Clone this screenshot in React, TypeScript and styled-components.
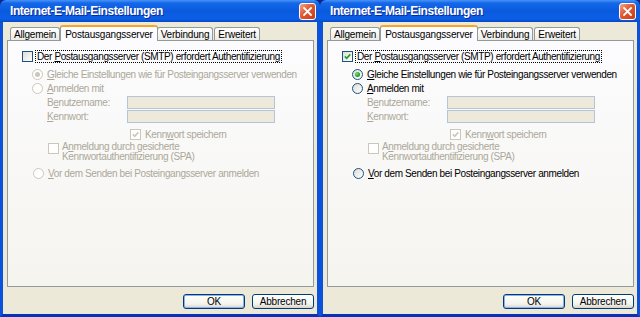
import React from 'react';
import styled, { createGlobalStyle } from 'styled-components';

const GlobalStyle = createGlobalStyle`
  * { box-sizing: border-box; }
  html, body { margin: 0; padding: 0; background: #0A2690; }
  body {
    width: 640px;
    height: 317px;
    overflow: hidden;
    font-family: 'Liberation Sans', Arial, sans-serif;
  }
`;

const Screen = styled.div`
  display: flex;
  width: 640px;
  height: 317px;
  overflow: hidden;
  background: #0A2690;
`;

const Window = styled.section`
  width: 320px;
  height: 317px;
  flex: none;
  display: flex;
  flex-direction: column;
`;

const TitleBar = styled.div`
  height: 22px;
  flex: none;
  display: flex;
  align-items: center;
  justify-content: space-between;
  padding: 0 4px 0 10px;
  border-radius: 6px 6px 0 0;
  background: linear-gradient(
    to bottom,
    #4A92F8 0%,
    #1468E8 14%,
    #0A5ADE 50%,
    #0C60E6 86%,
    #0746C8 100%
  );
`;

const TitleText = styled.span`
  color: #fff;
  font-weight: bold;
  font-size: 12px;
  letter-spacing: -0.45px;
  text-shadow: 1px 1px 0 #0A2A9A;
  white-space: nowrap;
`;

const CloseButton = styled.span`
  width: 17px;
  height: 17px;
  border: 1px solid #fff;
  border-radius: 3px;
  display: flex;
  align-items: center;
  justify-content: center;
  background: linear-gradient(135deg, #F3A48A 0%, #E2582F 45%, #C73C17 100%);
`;

const Body = styled.div`
  flex: 1;
  display: flex;
  flex-direction: column;
  background: #ECE9D8;
  border: 3px solid #0A52DC;
  border-bottom-color: #0831B8;
  border-top: none;
  padding: 3px 3px 5px 4px;
`;

const TabStrip = styled.div`
  height: 16px;
  flex: none;
  display: flex;
  align-items: flex-end;
  padding-left: 3px;
  margin-bottom: -1px;
  position: relative;
  z-index: 1;
`;

const Tab = styled.span<{ $active?: boolean }>`
  height: ${p => (p.$active ? 16 : 13)}px;
  margin: ${p => (p.$active ? '0 -1px 0 -1px' : '0 1px 1px 0')};
  padding: ${p => (p.$active ? '0 4px' : '0 3px')};
  display: flex;
  align-items: center;
  font-size: 10px;
  letter-spacing: -0.2px;
  color: #000;
  white-space: nowrap;
  border: 1px solid #919B9C;
  border-bottom: none;
  border-top: ${p => (p.$active ? '2px solid #F5A623' : '1px solid #919B9C')};
  border-radius: 3px 3px 0 0;
  background: ${p =>
    p.$active ? '#FCFCFE' : 'linear-gradient(to bottom, #FFFFFF, #ECEBE5)'};
  position: relative;
  z-index: ${p => (p.$active ? 2 : 1)};
`;

const Panel = styled.div`
  height: 247px;
  flex: none;
  display: flex;
  flex-direction: column;
  border: 1px solid #919B9C;
  background: linear-gradient(to bottom, #FCFCFE, #F5F4EF);
  padding: 8px 0 0 14px;
  font-size: 10px;
  letter-spacing: -0.38px;
`;

const Option = styled.div<{ $indent: number; $top: number; $off?: boolean; $tall?: boolean }>`
  display: flex;
  align-items: ${p => (p.$tall ? 'flex-start' : 'center')};
  gap: ${p => (p.$tall ? 3 : 4)}px;
  height: ${p => (p.$tall ? 20 : 14)}px;
  margin-top: ${p => p.$top}px;
  padding-left: ${p => p.$indent}px;
  color: ${p => (p.$off ? '#ACA899' : '#000')};
  white-space: nowrap;
`;

const TwoLines = styled.span`
  line-height: 10px;
`;

const Box = styled.span<{ $off?: boolean; $tall?: boolean }>`
  width: 11px;
  height: 11px;
  flex: none;
  margin-top: ${p => (p.$tall ? 1 : 0)}px;
  display: flex;
  align-items: center;
  justify-content: center;
  border: 1px solid ${p => (p.$off ? '#CAC8BB' : '#1C5180')};
  background: ${p =>
    p.$off ? '#FFFFFF' : 'linear-gradient(135deg, #DCDCD7, #FFFFFF)'};
`;

const Radio = styled.span<{ $off?: boolean }>`
  width: 11px;
  height: 11px;
  flex: none;
  border-radius: 50%;
  display: flex;
  align-items: center;
  justify-content: center;
  border: 1px solid ${p => (p.$off ? '#CAC8BB' : '#1C5180')};
  background: ${p =>
    p.$off ? '#FFFFFF' : 'linear-gradient(135deg, #DCDCD7, #FFFFFF)'};
`;

const Dot = styled.span<{ $off?: boolean }>`
  width: 5px;
  height: 5px;
  border-radius: 50%;
  background: ${p =>
    p.$off
      ? '#CAC8BB'
      : 'radial-gradient(circle at 35% 35%, #6EE36A, #21A121 60%, #178A17)'};
`;

const FocusLabel = styled.span`
  border: 1px dotted #000;
  padding: 0 1px;
  line-height: 11px;
  margin-left: -2px;
`;

const Credentials = styled.div`
  display: grid;
  grid-template-columns: 80px 148px;
  grid-auto-rows: 13px;
  row-gap: 1px;
  align-items: center;
  margin-top: 1px;
  padding-left: 25px;
  color: #ACA899;
`;

const Field = styled.span`
  display: block;
  height: 13px;
  border: 1px solid #B7C3D6;
  background: #EDEADC;
`;

const Footer = styled.div`
  display: flex;
  justify-content: flex-end;
  gap: 7px;
  margin-top: 7px;
`;

const Button = styled.button<{ $default?: boolean }>`
  width: 62px;
  height: 15px;
  padding: 0;
  font-family: 'Liberation Sans', Arial, sans-serif;
  font-size: 10px;
  letter-spacing: -0.2px;
  color: #000;
  border: 1px solid #003C74;
  border-radius: 3px;
  background: linear-gradient(to bottom, #FFFFFF, #F3F3EE 70%, #D8D2C6);
  box-shadow: ${p => (p.$default ? 'inset 0 0 0 1px #8EAEEC' : 'none')};
`;

const Check = ({ off }: { off?: boolean }) => (
  <svg width="7" height="7" viewBox="0 0 7 7">
    <polyline
      points="0.8,3.4 2.7,5.3 6.3,1.4"
      fill="none"
      stroke={off ? '#CAC8BB' : '#21A121'}
      strokeWidth="1.6"
    />
  </svg>
);

const CloseX = () => (
  <svg width="9" height="9" viewBox="0 0 9 9">
    <path d="M1 1 L8 8 M8 1 L1 8" stroke="#fff" strokeWidth="1.8" strokeLinecap="square" />
  </svg>
);

const Dialog = ({ authOn }: { authOn: boolean }) => (
  <Window>
    <TitleBar>
      <TitleText>Internet-E-Mail-Einstellungen</TitleText>
      <CloseButton>
        <CloseX />
      </CloseButton>
    </TitleBar>
    <Body>
      <TabStrip>
        <Tab>Allgemein</Tab>
        <Tab $active>Postausgangsserver</Tab>
        <Tab>Verbindung</Tab>
        <Tab>Erweitert</Tab>
      </TabStrip>
      <Panel>
        <Option $indent={0} $top={0}>
          <Box>{authOn && <Check />}</Box>
          <FocusLabel>
            Der <u>P</u>ostausgangsserver (SMTP) erfordert Authentifizierung
          </FocusLabel>
        </Option>
        <Option $indent={10} $top={4} $off={!authOn}>
          <Radio $off={!authOn}>
            <Dot $off={!authOn} />
          </Radio>
          <span>
            <u>G</u>leiche Einstellungen wie für Posteingangsserver verwenden
          </span>
        </Option>
        <Option $indent={10} $top={0} $off={!authOn}>
          <Radio $off={!authOn} />
          <span>
            <u>A</u>nmelden mit
          </span>
        </Option>
        <Credentials>
          <span>
            B<u>e</u>nutzername:
          </span>
          <Field />
          <span>
            <u>K</u>ennwort:
          </span>
          <Field />
        </Credentials>
        <Option $indent={108} $top={4} $off>
          <Box $off>
            <Check off />
          </Box>
          <span>
            Kenn<u>w</u>ort speichern
          </span>
        </Option>
        <Option $indent={26} $top={1} $off $tall>
          <Box $off $tall />
          <TwoLines>
            A<u>n</u>meldung durch gesicherte
            <br />
            Kennwortauthentifizierung (SPA)
          </TwoLines>
        </Option>
        <Option $indent={11} $top={4} $off={!authOn}>
          <Radio $off={!authOn} />
          <span>
            <u>V</u>or dem Senden bei Posteingangsserver anmelden
          </span>
        </Option>
      </Panel>
      <Footer>
        <Button $default>OK</Button>
        <Button>Abbrechen</Button>
      </Footer>
    </Body>
  </Window>
);

export default function App() {
  return (
    <>
      <GlobalStyle />
      <Screen>
        <Dialog authOn={false} />
        <Dialog authOn />
      </Screen>
    </>
  );
}
